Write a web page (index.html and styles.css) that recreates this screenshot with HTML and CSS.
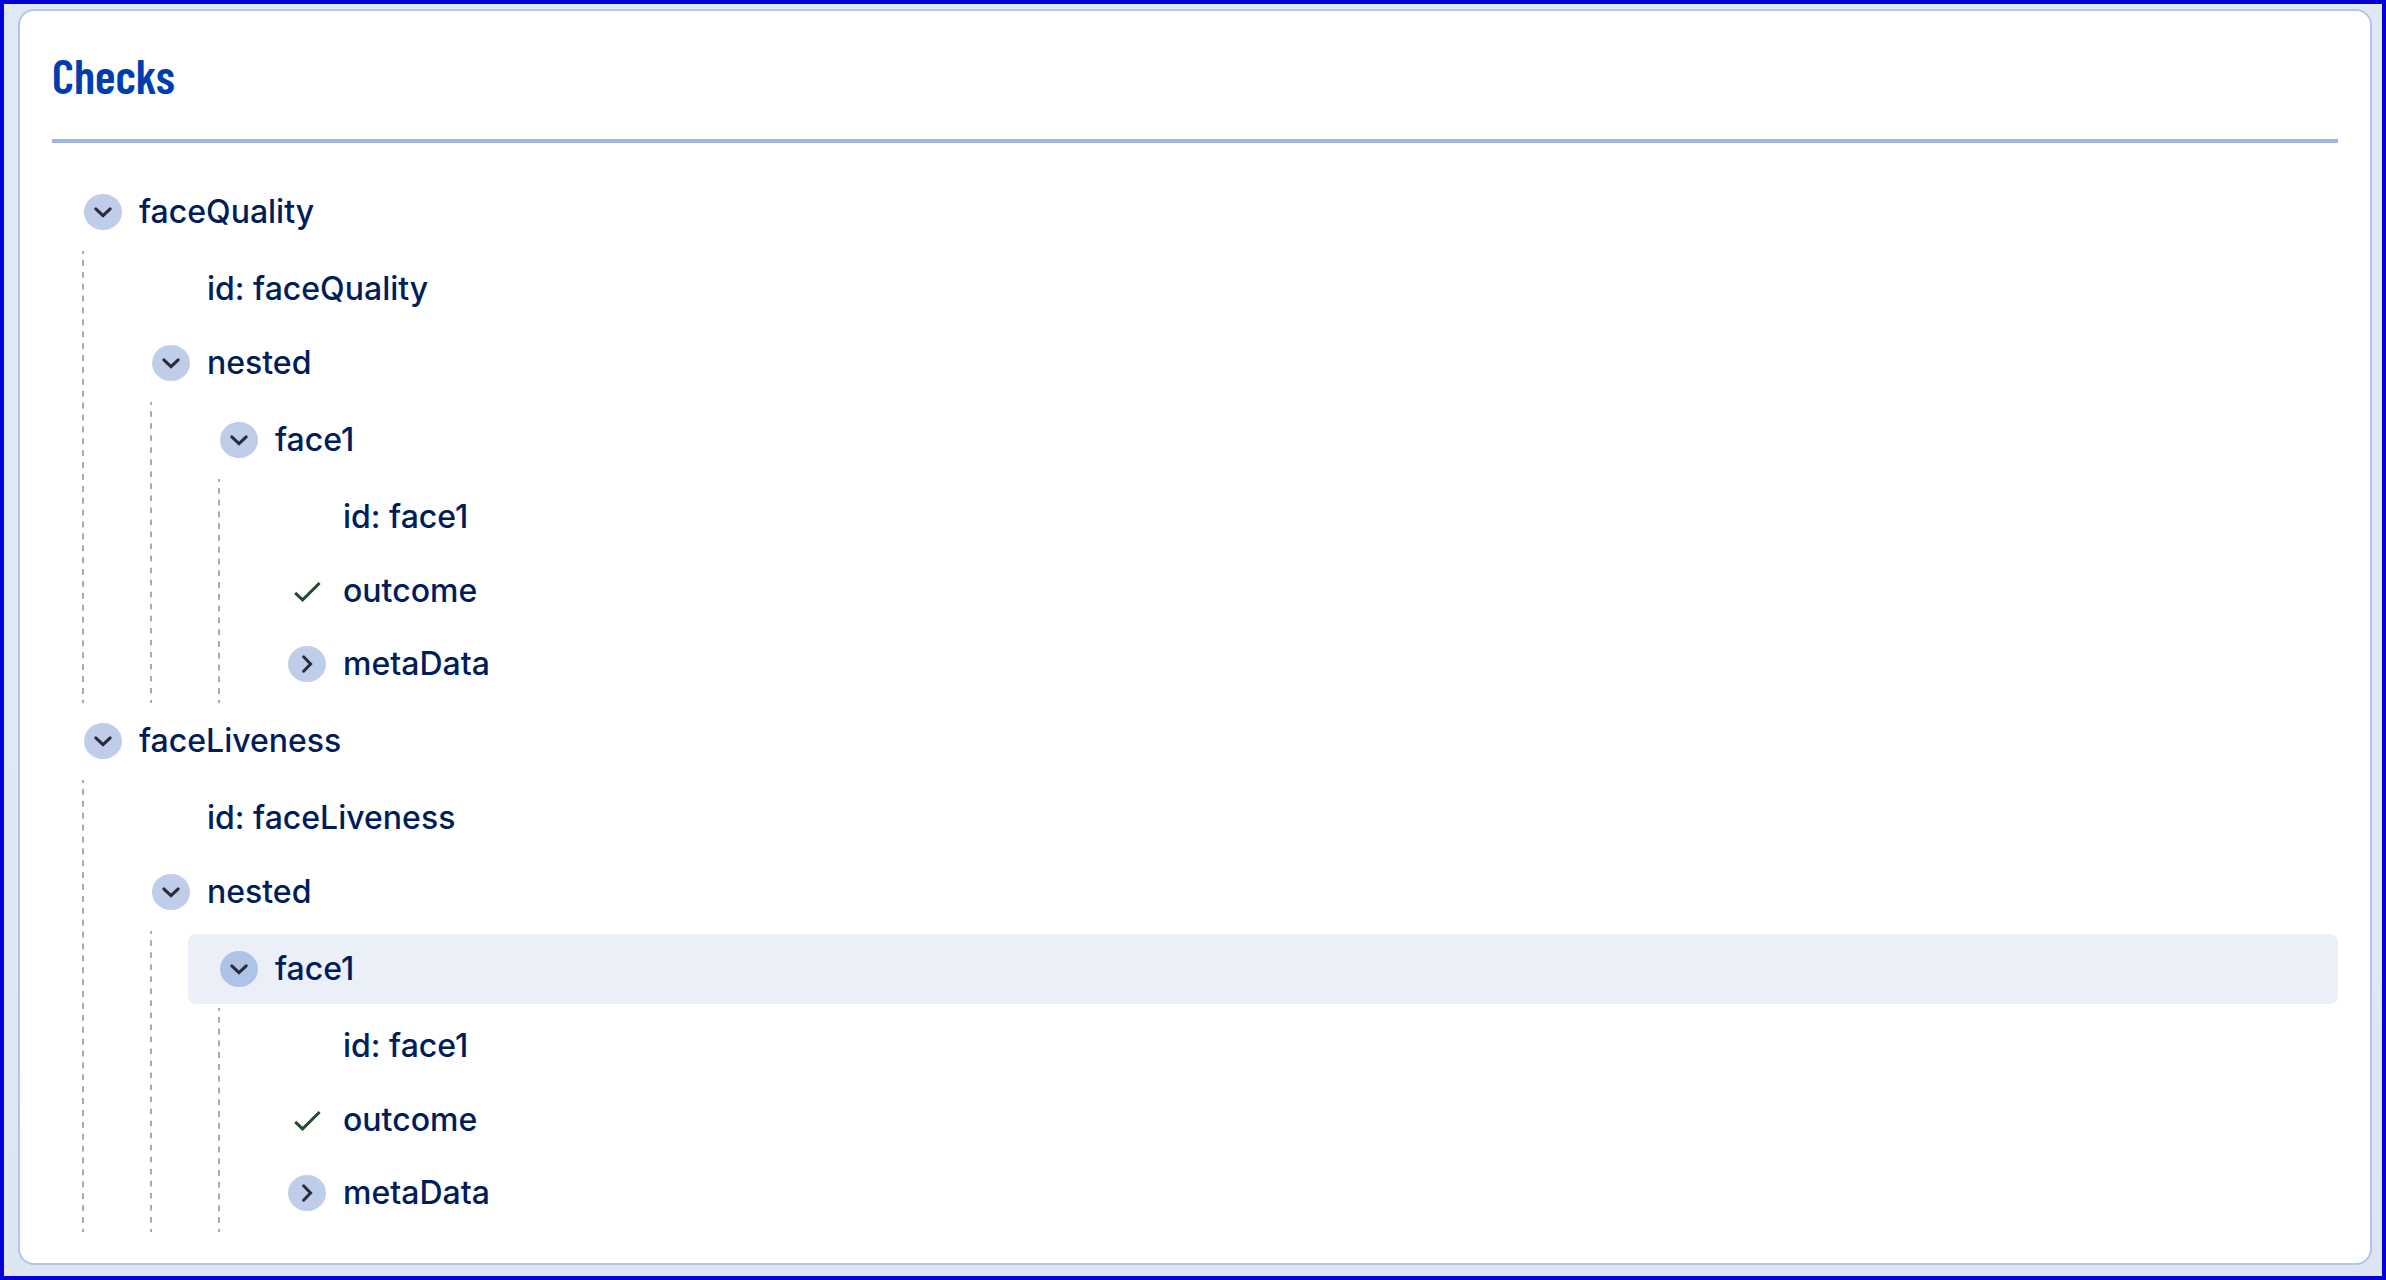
FILE: index.html
```
<!DOCTYPE html>
<html lang="en">
<head>
<meta charset="UTF-8">
<title>Checks</title>
<link rel="stylesheet" href="styles.css">
</head>
<body>
<!-- shared icons -->
<svg class="sprite" aria-hidden="true">
    <symbol id="down" viewBox="0 0 38 36"><path d="M11.8 14.8 19 21.6 26.2 14.8"/></symbol>
    <symbol id="right" viewBox="0 0 38 36"><path d="M15.6 10.8 22.6 18 15.6 25.2"/></symbol>
    <symbol id="check" viewBox="0 0 38 36"><path d="M7.2 19.8 14.6 26.8 31.6 10"/></symbol>
</svg>
<main class="card">
    <h2 class="title">Checks</h2>
    <ul class="tree">
        <li>
            <div class="row">
                <button type="button" class="toggle" aria-expanded="true" aria-label="Toggle faceQuality"><svg><use href="#down"/></svg></button>
                <span>faceQuality</span>
            </div>
            <ul>
                <li><div class="row leaf"><span>id: faceQuality</span></div></li>
                <li>
                    <div class="row">
                        <button type="button" class="toggle" aria-expanded="true" aria-label="Toggle nested"><svg><use href="#down"/></svg></button>
                        <span>nested</span>
                    </div>
                    <ul>
                        <li>
                            <div class="row">
                                <button type="button" class="toggle" aria-expanded="true" aria-label="Toggle face1"><svg><use href="#down"/></svg></button>
                                <span>face1</span>
                            </div>
                            <ul>
                                <li><div class="row leaf"><span>id: face1</span></div></li>
                                <li><div class="row outcome"><svg class="check"><use href="#check"/></svg><span>outcome</span></div></li>
                                <li>
                                    <div class="row">
                                        <button type="button" class="toggle" aria-expanded="false" aria-label="Toggle metaData"><svg><use href="#right"/></svg></button>
                                        <span>metaData</span>
                                    </div>
                                </li>
                            </ul>
                        </li>
                    </ul>
                </li>
            </ul>
        </li>
        <li>
            <div class="row">
                <button type="button" class="toggle" aria-expanded="true" aria-label="Toggle faceLiveness"><svg><use href="#down"/></svg></button>
                <span>faceLiveness</span>
            </div>
            <ul>
                <li><div class="row leaf"><span>id: faceLiveness</span></div></li>
                <li>
                    <div class="row">
                        <button type="button" class="toggle" aria-expanded="true" aria-label="Toggle nested"><svg><use href="#down"/></svg></button>
                        <span>nested</span>
                    </div>
                    <ul>
                        <li>
                            <div class="row active">
                                <button type="button" class="toggle" aria-expanded="true" aria-label="Toggle face1"><svg><use href="#down"/></svg></button>
                                <span>face1</span>
                            </div>
                            <ul>
                                <li><div class="row leaf"><span>id: face1</span></div></li>
                                <li><div class="row outcome"><svg class="check"><use href="#check"/></svg><span>outcome</span></div></li>
                                <li>
                                    <div class="row">
                                        <button type="button" class="toggle" aria-expanded="false" aria-label="Toggle metaData"><svg><use href="#right"/></svg></button>
                                        <span>metaData</span>
                                    </div>
                                </li>
                            </ul>
                        </li>
                    </ul>
                </li>
            </ul>
        </li>
    </ul>
</main>
</body>
</html>
```
FILE: styles.css
```
*{
    box-sizing:border-box;
    margin:0;
    padding:0;
}
body{
    min-height:100vh;
    padding:5px 10px 10px 14px;
    border:4px solid #0500d6;
    background:linear-gradient(#dfe9f5 60%,#dde5f3);
    color:#001d5b;
    font-family:Inter,"Liberation Sans",sans-serif;
    font-size:32px;
    font-weight:500;
    line-height:48px;
}
.sprite{
    display:none;
}
.card{
    padding:32px 32px 31px;
    border:2px solid #b3c6e8;
    border-radius:16px;
    background:#fff;
}
.title{
    padding-bottom:32px;
    border-bottom:4px solid #9fb5e1;
    color:#003eb0;
    font-family:"Barlow Condensed","Roboto Condensed","Liberation Sans Narrow",Roboto,sans-serif;
    font-size:48px;
    font-weight:600;
    line-height:64px;
}
ul{
    list-style:none;
}
.tree{
    padding-top:31px;
}
/* guide line, the tile is a half dash at each end so it starts and stops on one */
.tree ul{
    margin-left:30px;
    padding-left:38px;
    background-image:linear-gradient(#aaaaae 3px,transparent 3px,transparent 9px,#aaaaae 9px);
    background-size:2px 12px;
    background-repeat:no-repeat round;
}
.row{
    display:flex;
    align-items:center;
    gap:17px;
    height:70px;
    margin-bottom:4px;
    padding-left:32px;
    border-radius:8px;
}
/* flow-root keeps the row margins inside each item */
li{
    display:flow-root;
    padding-top:3px;
}
.leaf{
    margin-bottom:1px;
    padding-left:87px;
}
.outcome{
    margin-bottom:0;
}
.active{
    background:#ebeff8;
}
.toggle{
    width:38px;
    height:36px;
    border:0;
    border-radius:50%;
    background:#bfcdeb;
    cursor:pointer;
}
.active .toggle{
    background:#afc3e7;
}
svg{
    display:block;
    width:38px;
    height:36px;
    fill:none;
    stroke:#292b3b;
    stroke-width:3;
    stroke-linecap:round;
}
.check{
    stroke:#1f4d2e;
    stroke-linecap:butt;
}
```
